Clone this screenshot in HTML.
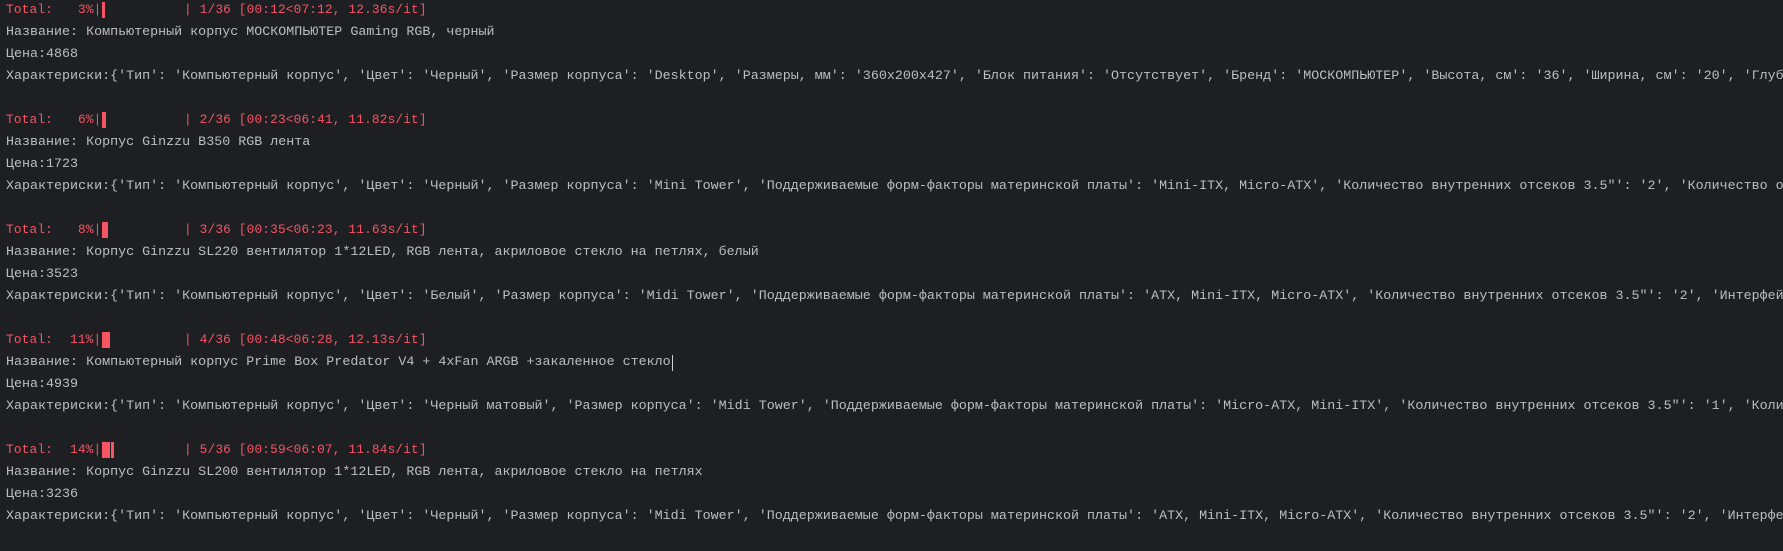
<!DOCTYPE html>
<html><head><meta charset="utf-8"><style>
html,body{margin:0;padding:0;background:#1e1f22;width:1783px;height:551px;overflow:hidden}
#w{position:relative;width:1783px;height:551px;overflow:hidden}
.l{position:absolute;left:6px;width:1777px;overflow:hidden;height:22px;line-height:22px;white-space:pre;font-family:"Liberation Mono","DejaVu Sans Mono",monospace;font-size:13.35px;color:#bcbec4}
.r{color:#f75464;font-family:"Liberation Mono","DejaVu Sans Mono",monospace;font-size:12.8px;letter-spacing:0.15px;position:absolute;white-space:pre;line-height:22px;height:22px}
.bar{position:absolute;background:#f75464;height:16px}
.cur{position:absolute;width:1px;height:16px;background:#cfd1d6}
</style></head><body><div id="w">

<div class="r" style="left:6px;top:-1px">Total:</div><div class="r" style="left:78px;top:-1px">3%|</div><div class="bar" style="left:102px;top:2px;width:3px"></div><div class="r" style="left:184px;top:-1px">| 1/36 [00:12&lt;07:12, 12.36s/it]</div>
<div class="l" style="top:22px">Название: Компьютерный корпус МОСКОМПЬЮТЕР Gaming RGB, черный</div>
<div class="l" style="top:44px">Цена:4868</div>
<div class="l" style="top:66px">Характериски:{'Тип': 'Компьютерный корпус', 'Цвет': 'Черный', 'Размер корпуса': 'Desktop', 'Размеры, мм': '360x200x427', 'Блок питания': 'Отсутствует', 'Бренд': 'МОСКОМПЬЮТЕР', 'Высота, см': '36', 'Ширина, см': '20', 'Глубина, см': '43'}</div>

<div class="r" style="left:6px;top:109px">Total:</div><div class="r" style="left:78px;top:109px">6%|</div><div class="bar" style="left:102px;top:112px;width:4px"></div><div class="r" style="left:184px;top:109px">| 2/36 [00:23&lt;06:41, 11.82s/it]</div>
<div class="l" style="top:132px">Название: Корпус Ginzzu B350 RGB лента</div>
<div class="l" style="top:154px">Цена:1723</div>
<div class="l" style="top:176px">Характериски:{'Тип': 'Компьютерный корпус', 'Цвет': 'Черный', 'Размер корпуса': 'Mini Tower', 'Поддерживаемые форм-факторы материнской платы': 'Mini-ITX, Micro-ATX', 'Количество внутренних отсеков 3.5"': '2', 'Количество отсеков'}</div>

<div class="r" style="left:6px;top:219px">Total:</div><div class="r" style="left:78px;top:219px">8%|</div><div class="bar" style="left:102px;top:222px;width:6px"></div><div class="r" style="left:184px;top:219px">| 3/36 [00:35&lt;06:23, 11.63s/it]</div>
<div class="l" style="top:242px">Название: Корпус Ginzzu SL220 вентилятор 1*12LED, RGB лента, акриловое стекло на петлях, белый</div>
<div class="l" style="top:264px">Цена:3523</div>
<div class="l" style="top:286px">Характериски:{'Тип': 'Компьютерный корпус', 'Цвет': 'Белый', 'Размер корпуса': 'Midi Tower', 'Поддерживаемые форм-факторы материнской платы': 'ATX, Mini-ITX, Micro-ATX', 'Количество внутренних отсеков 3.5"': '2', 'Интерфейсы'}</div>

<div class="r" style="left:6px;top:329px">Total:</div><div class="r" style="left:70px;top:329px">11%|</div><div class="bar" style="left:102px;top:332px;width:8px"></div><div class="r" style="left:184px;top:329px">| 4/36 [00:48&lt;06:28, 12.13s/it]</div>
<div class="l" style="top:352px">Название: Компьютерный корпус Prime Box Predator V4 + 4xFan ARGB +закаленное стекло</div><div class="cur" style="left:672px;top:355px"></div>
<div class="l" style="top:374px">Цена:4939</div>
<div class="l" style="top:396px">Характериски:{'Тип': 'Компьютерный корпус', 'Цвет': 'Черный матовый', 'Размер корпуса': 'Midi Tower', 'Поддерживаемые форм-факторы материнской платы': 'Micro-ATX, Mini-ITX', 'Количество внутренних отсеков 3.5"': '1', 'Количество'}</div>

<div class="r" style="left:6px;top:439px">Total:</div><div class="r" style="left:70px;top:439px">14%|</div><div class="bar" style="left:102px;top:442px;width:8px"></div><div class="bar" style="left:111px;top:442px;width:3px"></div><div class="r" style="left:184px;top:439px">| 5/36 [00:59&lt;06:07, 11.84s/it]</div>
<div class="l" style="top:462px">Название: Корпус Ginzzu SL200 вентилятор 1*12LED, RGB лента, акриловое стекло на петлях</div>
<div class="l" style="top:484px">Цена:3236</div>
<div class="l" style="top:506px">Характериски:{'Тип': 'Компьютерный корпус', 'Цвет': 'Черный', 'Размер корпуса': 'Midi Tower', 'Поддерживаемые форм-факторы материнской платы': 'ATX, Mini-ITX, Micro-ATX', 'Количество внутренних отсеков 3.5"': '2', 'Интерфейсы'}</div>

</div></body></html>
